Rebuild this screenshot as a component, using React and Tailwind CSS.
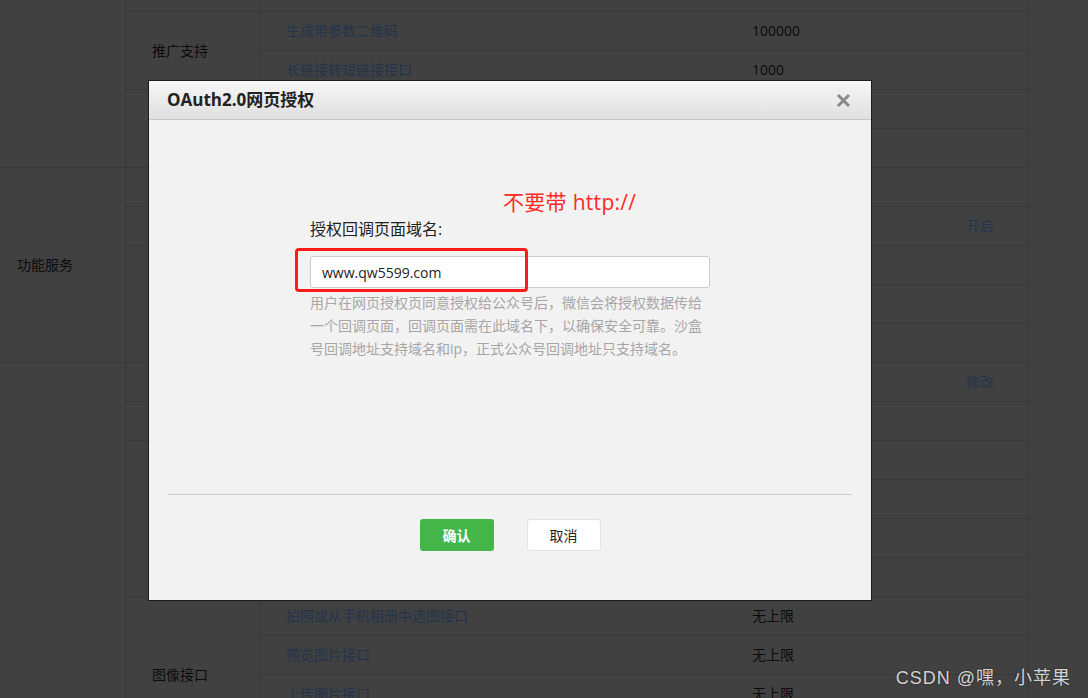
import { useState } from 'react';

const FONT = "font-['Open_Sans','Noto_Sans_CJK_SC',sans-serif]";

// background table, drawn as it looks under the dark mask
const sections = [
  { h: 'h-[195px]' },
  { h: 'h-[195px]', text: '功能服务' },
  { h: 'h-[390px]' },
];

const groups = [
  { h: 'h-[39px]' },
  { h: 'h-[78px]', text: '推广支持' },
  { h: 'h-[78px]' },
  { h: 'h-[39px]' },
  { h: 'h-[39px]' },
  { h: 'h-[117px]' },
  { h: 'h-[39px]' },
  { h: 'h-[39px]' },
  { h: 'h-[156px]' },
  { h: 'h-[156px]', text: '图像接口' },
];

const rows = [
  {},
  { name: '生成带参数二维码', value: '100000' },
  { name: '长链接转短链接接口', value: '1000' },
  {},
  {},
  {},
  { action: '开启' },
  {},
  {},
  {},
  { action: '修改' },
  {},
  {},
  {},
  {},
  {},
  { name: '拍照或从手机相册中选图接口', value: '无上限' },
  { name: '预览图片接口', value: '无上限' },
  { name: '上传图片接口', value: '无上限' },
  {},
];

function BackTable() {
  return (
    <div className="flex -mt-[27px] text-[14px] leading-none">
      <div className="w-[126px] shrink-0 flex flex-col border-r border-[#373737]">
        {sections.map((s, i) => (
          <div key={i} className={`${s.h} shrink-0 flex items-center pl-[17px] border-b border-[#373737] text-[#0c0c0c]`}>
            {s.text}
          </div>
        ))}
      </div>
      <div className="w-[134px] shrink-0 flex flex-col border-r border-[#373737]">
        {groups.map((g, i) => (
          <div key={i} className={`${g.h} shrink-0 flex items-center pl-[26px] border-b border-[#373737] text-[#0c0c0c]`}>
            {g.text}
          </div>
        ))}
      </div>
      <div className="w-[769px] shrink-0 flex flex-col border-r border-[#373737]">
        {rows.map((r, i) => (
          <div key={i} className="h-[39px] shrink-0 flex items-center pl-[26px] border-b border-[#373737]">
            <span className="w-[466px] shrink-0 text-[#23344c]">{r.name}</span>
            <span className="w-[214px] shrink-0 text-[#0c0c0c]">{r.value}</span>
            <span className="text-[#23344c]">{r.action}</span>
          </div>
        ))}
      </div>
    </div>
  );
}

function OAuthDialog() {
  const [domain, setDomain] = useState('www.qw5599.com');

  return (
    <div className="absolute left-[148px] top-[80px] w-[724px] h-[521px] flex flex-col border border-[#1c1c1c] bg-[#f2f2f2]">
      <div className="h-[39px] shrink-0 flex items-center justify-between pl-[18px] pr-[20px] border-b border-[#c6c6c6] bg-gradient-to-b from-[#f6f6f6] to-[#e0e0e0]">
        <span className="text-[17px] font-bold text-[#222]">OAuth2.0网页授权</span>
        <svg width="15" height="15" viewBox="0 0 15 15" className="mt-[1px]">
          <path d="M2 2 L13 13 M13 2 L2 13" stroke="#8a8a8a" strokeWidth="3" strokeLinecap="butt" />
        </svg>
      </div>

      <div className="w-[400px] mx-auto pt-[68px] flex flex-col">
        <p className="ml-[193px] text-[21px] leading-[28px] text-[#ff2a22] tracking-[0.3px]">不要带 http://</p>
        <label className="mt-[1px] text-[16px] leading-[24px] text-[#222]">授权回调页面域名:</label>
        <div className="relative mt-[15px]">
          <input
            value={domain}
            onChange={(e) => setDomain(e.target.value)}
            className="w-full h-[32px] px-[11px] text-[14px] text-[#222] bg-white border border-[#cccccc] rounded-[3px] outline-none"
          />
          <div className="absolute -left-[15px] -top-[8px] w-[233px] h-[44px] border-[3px] border-[#ff1a1a] rounded-[4px] pointer-events-none" />
        </div>
        <p className="mt-[3px] text-[14px] leading-[23px] text-[#a6a6a6]">
          用户在网页授权页同意授权给公众号后，微信会将授权数据传给一个回调页面，回调页面需在此域名下，以确保安全可靠。沙盒号回调地址支持域名和ip，正式公众号回调地址只支持域名。
        </p>
      </div>

      <div className="mt-auto mx-[19px] border-t border-[#cacaca] pt-[24px] pb-[49px] flex justify-center gap-[33px]">
        <button className="w-[74px] h-[32px] rounded-[3px] bg-[#44b549] text-white text-[14px] font-bold">确认</button>
        <button className="w-[74px] h-[32px] rounded-[3px] bg-white border border-[#e2e2e8] text-[#222] text-[14px]">取消</button>
      </div>
    </div>
  );
}

export default function App() {
  return (
    <div className={`relative w-[1088px] h-[698px] overflow-hidden bg-[#414141] ${FONT}`}>
      <BackTable />
      <OAuthDialog />
      <div className="absolute right-[17px] top-[665px] text-[18px] leading-[26px] tracking-[1px] text-[#d2d2d2] font-['Liberation_Sans','Noto_Sans_CJK_SC',sans-serif] [text-shadow:0_0_2px_rgba(0,0,0,0.5)]">
        CSDN @嘿，小苹果
      </div>
    </div>
  );
}
